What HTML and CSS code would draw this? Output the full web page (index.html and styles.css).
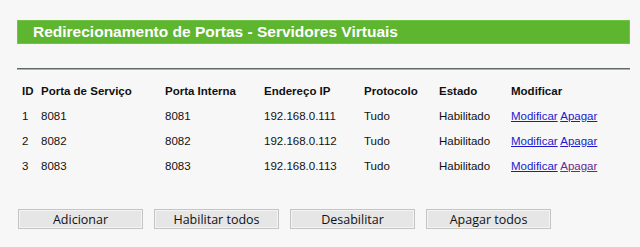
FILE: index.html
```html
<!doctype html>
<html lang="pt">
	<head>
		<meta charset="utf-8">
		<title>Servidores Virtuais</title>
		<link rel="stylesheet" href="styles.css">
	</head>
	<body>
		<div class="page">
			<h1 class="title-bar">Redirecionamento de Portas - Servidores Virtuais</h1>
			<hr class="rule">

			<table class="vs-table">
				<colgroup>
					<col class="c-id">
					<col class="c-svc">
					<col class="c-int">
					<col class="c-ip">
					<col class="c-proto">
					<col class="c-state">
					<col class="c-mod">
				</colgroup>
				<thead>
					<tr>
						<th>ID</th>
						<th>Porta de Serviço</th>
						<th>Porta Interna</th>
						<th>Endereço IP</th>
						<th>Protocolo</th>
						<th>Estado</th>
						<th>Modificar</th>
					</tr>
				</thead>
				<tbody>
					<tr>
						<td>1</td>
						<td>8081</td>
						<td>8081</td>
						<td>192.168.0.111</td>
						<td>Tudo</td>
						<td>Habilitado</td>
						<td><a href="#">Modificar</a> <a href="#">Apagar</a></td>
					</tr>
					<tr>
						<td>2</td>
						<td>8082</td>
						<td>8082</td>
						<td>192.168.0.112</td>
						<td>Tudo</td>
						<td>Habilitado</td>
						<td><a href="#">Modificar</a> <a href="#">Apagar</a></td>
					</tr>
					<tr>
						<td>3</td>
						<td>8083</td>
						<td>8083</td>
						<td>192.168.0.113</td>
						<td>Tudo</td>
						<td>Habilitado</td>
						<td><a href="#">Modificar</a> <a href="#" class="visited">Apagar</a></td>
					</tr>
				</tbody>
			</table>

			<div class="actions">
				<button>Adicionar</button>
				<button>Habilitar todos</button>
				<button>Desabilitar</button>
				<button>Apagar todos</button>
			</div>
		</div>
	</body>
</html>
```

FILE: styles.css
```css
html {
	font-family: "Liberation Sans", Arial, sans-serif;
	background: #f7f7f7;
}

body {
	margin: 0;
}

.page {
	padding: 20px 10px 0 17px;
	width: 613px;
}

.title-bar {
	margin: 0;
	height: 24px;
	box-sizing: border-box;
	padding-left: 15px;
	background: #5db530;
	border: 1px solid #72c246;
	color: #fff;
	font-size: 15.5px;
	font-weight: bold;
	line-height: 22px;
}

.rule {
	margin: 24px 0 0 0;
	height: 0;
	border: 0;
	border-top: 1px solid #5e6a6a;
	border-bottom: 1px solid #a9b2b2;
}

.vs-table {
	margin-top: 8px;
	margin-left: 5px;
	border-collapse: collapse;
	table-layout: fixed;
	font-size: 11.5px;
	color: #111;
}

.vs-table th,
.vs-table td {
	padding: 0;
	height: 25px;
	text-align: left;
	white-space: nowrap;
}

.vs-table th {
	font-weight: bold;
}

.c-id { width: 19px; }
.c-svc { width: 124px; }
.c-int { width: 99px; }
.c-ip { width: 100px; }
.c-proto { width: 75px; }
.c-state { width: 72px; }
.c-mod { width: 110px; }

.vs-table a {
	color: #1a1acc;
}

.vs-table a.visited {
	color: #6a2a8b;
}

.actions {
	display: flex;
	gap: 11px;
	margin-top: 31px;
	margin-left: 1px;
}

.actions button {
	width: 125px;
	height: 20px;
	padding: 0;
	background: #e6e6e6;
	border: 1px solid #c4c4c4;
	box-shadow: inset 0 0 0 1px #f4f4f4;
	font-family: "Open Sans", "DejaVu Sans", sans-serif;
	font-size: 12.5px;
	color: #111;
	cursor: pointer;
}
```
